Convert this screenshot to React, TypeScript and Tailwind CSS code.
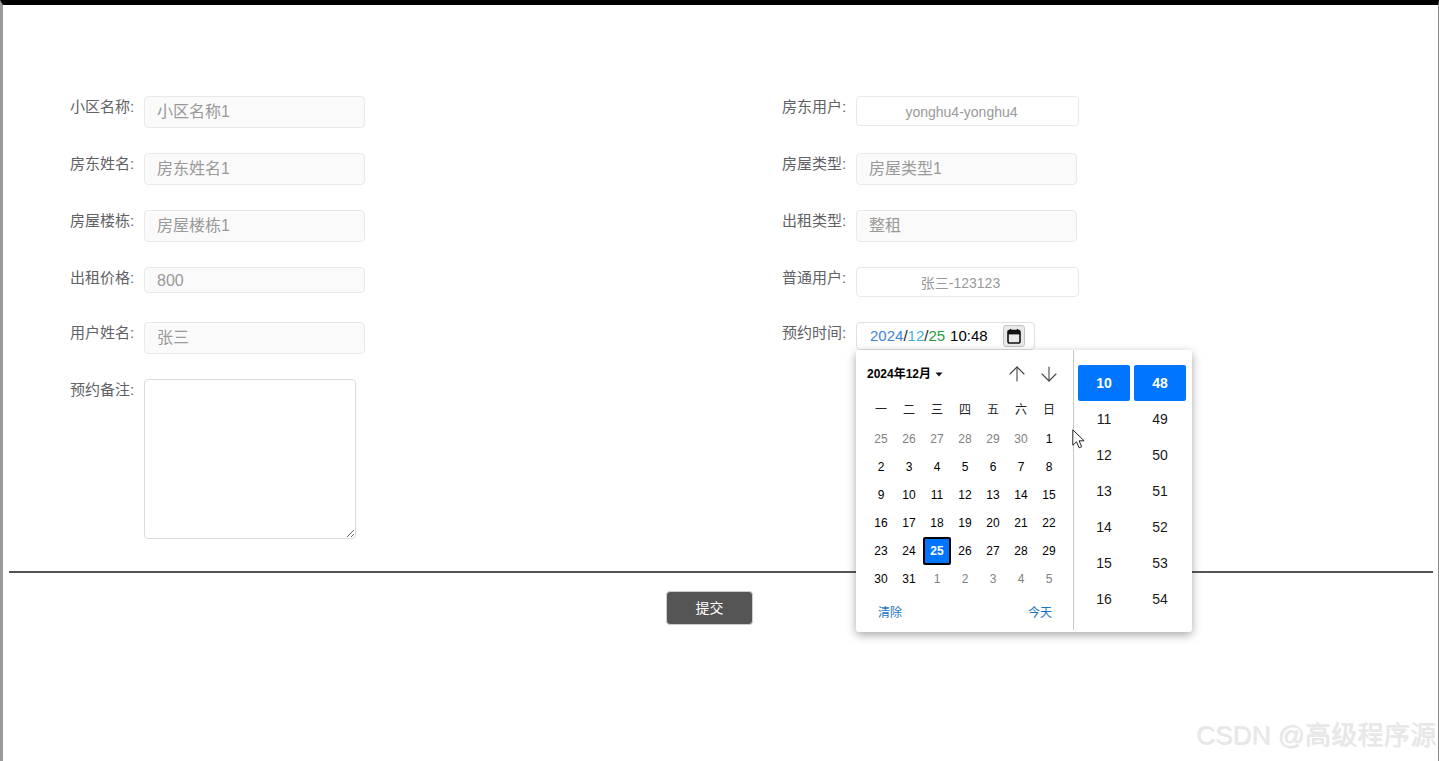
import { ArrowDown, ArrowUp } from 'lucide-react';

const FONT = 'font-["Liberation_Sans","Noto_Sans_CJK_SC",sans-serif]';

const weekDays = ['一', '二', '三', '四', '五', '六', '日'];

// [day, inCurrentMonth]
const calendarDays: [number, boolean][] = [
  ...[25, 26, 27, 28, 29, 30].map((d): [number, boolean] => [d, false]),
  ...Array.from({ length: 31 }, (_, i): [number, boolean] => [i + 1, true]),
  ...[1, 2, 3, 4, 5].map((d): [number, boolean] => [d, false]),
];

const hours = [10, 11, 12, 13, 14, 15, 16];
const minutes = [48, 49, 50, 51, 52, 53, 54];

function Field({ label, children }: { label: string; children: React.ReactNode }) {
  return (
    <div className="flex items-start">
      <label className="w-[64px] mr-[10px] pt-[1px] text-[15px] leading-[20px] text-[#606266] whitespace-nowrap">
        {label}:
      </label>
      {children}
    </div>
  );
}

function TextInput({ value, short }: { value: string; short?: boolean }) {
  return (
    <input
      readOnly
      value={value}
      className={`w-[221px] ${short ? 'h-[26px] pt-[2px]' : 'h-[32px] pb-[4px]'} px-[12px] rounded-[4px] border border-[#e9e9e9] bg-[#fafafa] text-[16px] text-[#999] outline-none`}
    />
  );
}

function SelectBox({ value, inset }: { value: string; inset: string }) {
  return (
    <input
      readOnly
      value={value}
      className={`w-[223px] h-[30px] ${inset} rounded-[4px] border border-[#e9e9e9] bg-white text-center text-[14px] text-[#999] outline-none`}
    />
  );
}

function TimeColumn({ items }: { items: number[] }) {
  return (
    <div className="flex flex-col w-[52px]">
      {items.map((n, i) => (
        <div
          key={n}
          className={`h-[36px] flex items-center justify-center text-[14px] rounded-[2px] ${
            i === 0 ? 'bg-[#0075ff] text-white font-bold' : 'text-[#1a1a1a]'
          }`}
        >
          {n}
        </div>
      ))}
    </div>
  );
}

function DatePopup() {
  return (
    <div className="absolute left-0 top-[28px] z-10 flex w-[336px] h-[282px] rounded-[3px] bg-white shadow-[0_3px_10px_rgba(0,0,0,0.35)]">
      <div className="w-[218px] pl-[11px] border-r border-[#c8c8c8] mb-[2px]">
        <div className="flex items-center h-[48px]">
          <span className="text-[12px] font-bold text-black">2024年12月</span>
          <svg width="8" height="5" viewBox="0 0 8 5" className="ml-[4px]">
            <path d="M0.5 0.5h7L4 4.5z" fill="#111" />
          </svg>
          <div className="ml-[62px] flex gap-[8px] text-[#444]">
            <ArrowUp size={24} strokeWidth={1.1} />
            <ArrowDown size={24} strokeWidth={1.1} />
          </div>
        </div>
        <div className="grid grid-cols-[repeat(7,28px)] h-[26px] mt-[-1px] items-center text-center text-[12px] text-[#222]">
          {weekDays.map((d) => (
            <span key={d}>{d}</span>
          ))}
        </div>
        <div className="grid grid-cols-[repeat(7,28px)] auto-rows-[28px] mt-[2px] text-[12px]">
          {calendarDays.map(([day, current], i) =>
            current && day === 25 ? (
              <div
                key={i}
                className="flex items-center justify-center rounded-[2px] border-2 border-black bg-[#0075ff] font-bold text-white"
              >
                {day}
              </div>
            ) : (
              <div
                key={i}
                className={`flex items-center justify-center ${current ? 'text-black' : 'text-[#808080]'}`}
              >
                {day}
              </div>
            ),
          )}
        </div>
        <div className="flex justify-between pl-[11px] pr-[21px] mt-[10px] text-[12px] leading-[20px] text-[#1a73c0]">
          <span>清除</span>
          <span>今天</span>
        </div>
      </div>
      <div className="flex gap-[4px] pl-[4px] pt-[15px]">
        <TimeColumn items={hours} />
        <TimeColumn items={minutes} />
      </div>
    </div>
  );
}

function DateTimeField() {
  return (
    <div className="relative">
      <div className="flex items-center w-[179px] h-[28px] pl-[13px] rounded-[4px] border border-[#e0e0e0] bg-white text-[15px] leading-[28px]">
        <span className="text-[#3d85d8]">2024</span>
        <span className="text-[#222]">/</span>
        <span className="text-[#45b0e0]">12</span>
        <span className="text-[#222]">/</span>
        <span className="text-[#1f9d3a]">25</span>
        <span className="ml-[5px] text-black">10:48</span>
        <span className="ml-[15px] flex items-center justify-center w-[22px] h-[22px] rounded-[3px] border border-[#c4c4c4] bg-[#e9e9e9]">
          <svg width="14" height="15" viewBox="0 0 14 15">
            <path
              d="M2.5 1.5h9A1.5 1.5 0 0 1 13 3v9.5a1.5 1.5 0 0 1-1.5 1.5h-9A1.5 1.5 0 0 1 1 12.5V3a1.5 1.5 0 0 1 1.5-1.5z"
              fill="none"
              stroke="#111"
              strokeWidth="1.6"
            />
            <path d="M1 2h12v3.4H1z" fill="#111" />
            <path d="M3.5 0v2M10.5 0v2" stroke="#111" strokeWidth="1.4" />
          </svg>
        </span>
      </div>
      <DatePopup />
    </div>
  );
}

export default function App() {
  return (
    <div
      className={`relative h-[761px] overflow-hidden border-t-[5px] border-t-black border-l-[3px] border-l-[#9a9a9a] border-r border-r-[#8a8a8a] bg-white ${FONT}`}
    >
      <main className="pt-[91px]">
        <div className="grid grid-cols-[712px_1fr] grid-rows-[57px_57px_57px_55px_57px_192px] pl-[67px]">
          <Field label="小区名称">
            <TextInput value="小区名称1" />
          </Field>
          <Field label="房东用户">
            <SelectBox value="yonghu4-yonghu4" inset="pt-[1px] pr-[12px]" />
          </Field>

          <Field label="房东姓名">
            <TextInput value="房东姓名1" />
          </Field>
          <Field label="房屋类型">
            <TextInput value="房屋类型1" />
          </Field>

          <Field label="房屋楼栋">
            <TextInput value="房屋楼栋1" />
          </Field>
          <Field label="出租类型">
            <TextInput value="整租" />
          </Field>

          <Field label="出租价格">
            <TextInput value="800" short />
          </Field>
          <Field label="普通用户">
            <SelectBox value="张三-123123" inset="pr-[14px]" />
          </Field>

          <Field label="用户姓名">
            <TextInput value="张三" />
          </Field>
          <Field label="预约时间">
            <DateTimeField />
          </Field>

          <Field label="预约备注">
            <textarea
              readOnly
              className="w-[212px] h-[160px] rounded-[4px] border border-[#dcdcdc] bg-white outline-none"
            />
          </Field>
        </div>

        <hr className="ml-[6px] mr-[5px] border-t-2 border-[#555]" />

        <div className="flex pl-[663px] mt-[18px]">
          <button className="w-[87px] h-[34px] rounded-[4px] border border-[#ccc] bg-[#555] text-[14px] text-white">
            提交
          </button>
        </div>
      </main>

      {/* mouse pointer captured in the screenshot */}
      <svg className="absolute left-[1069px] top-[424px] z-20" width="14" height="20" viewBox="0 0 14 20">
        <path
          d="M0.8 0.8v15.4l3.7-3.4 2.6 6 2.6-1.1-2.6-5.9h5z"
          fill="#fff"
          stroke="#222"
          strokeWidth="1"
          strokeLinejoin="round"
        />
      </svg>

      {/* CSDN watermark */}
      <div className="absolute right-[2px] top-[714px] text-[26.3px] leading-[32px] whitespace-nowrap text-[#e8e8e8] [text-shadow:1px_1px_0_rgba(0,0,0,0.1)]">
        CSDN @高级程序源
      </div>
    </div>
  );
}
